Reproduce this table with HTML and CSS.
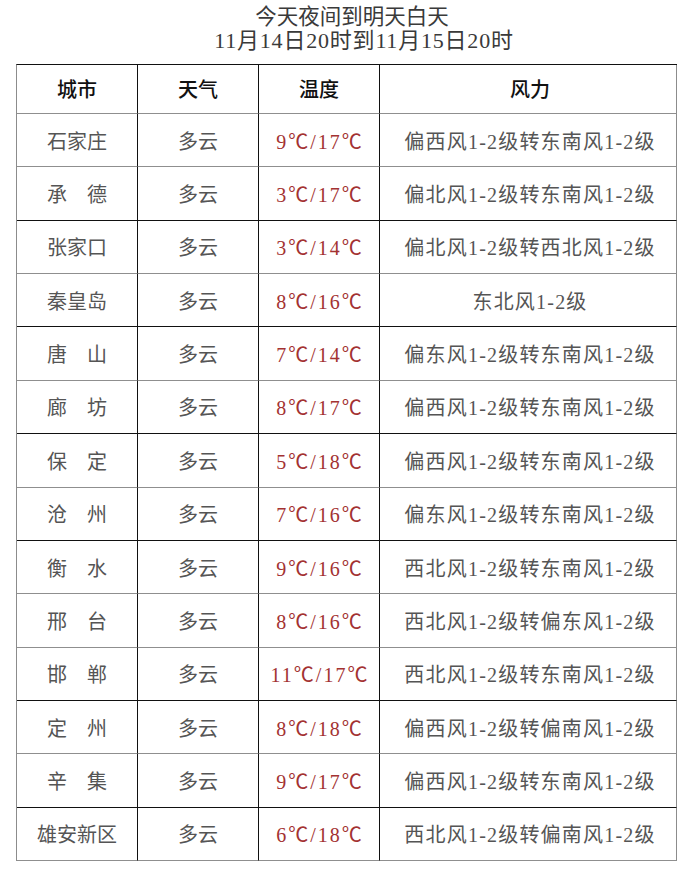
FILE: index.html
```html
<!DOCTYPE html>
<html lang="zh-CN">
<head>
<meta charset="utf-8">
<title>今天夜间到明天白天</title>
<link rel="stylesheet" href="styles.css">
</head>
<body>
<div class="title">
  <div class="title-line first">今天夜间到明天白天</div>
  <div class="title-line second">11月14日20时到11月15日20时</div>
</div>
<div class="grid">
  <div class="row head">
    <div class="cell">城市</div><div class="cell">天气</div><div class="cell">温度</div><div class="cell">风力</div>
  </div>
  <div class="row">
    <div class="cell">石家庄</div><div class="cell">多云</div><div class="cell temp">9℃/17℃</div><div class="cell wind">偏西风1-2级转东南风1-2级</div>
  </div>
  <div class="row dark">
    <div class="cell">承　德</div><div class="cell">多云</div><div class="cell temp">3℃/17℃</div><div class="cell wind">偏北风1-2级转东南风1-2级</div>
  </div>
  <div class="row">
    <div class="cell">张家口</div><div class="cell">多云</div><div class="cell temp">3℃/14℃</div><div class="cell wind">偏北风1-2级转西北风1-2级</div>
  </div>
  <div class="row dark">
    <div class="cell">秦皇岛</div><div class="cell">多云</div><div class="cell temp">8℃/16℃</div><div class="cell wind">东北风1-2级</div>
  </div>
  <div class="row">
    <div class="cell">唐　山</div><div class="cell">多云</div><div class="cell temp">7℃/14℃</div><div class="cell wind">偏东风1-2级转东南风1-2级</div>
  </div>
  <div class="row dark">
    <div class="cell">廊　坊</div><div class="cell">多云</div><div class="cell temp">8℃/17℃</div><div class="cell wind">偏西风1-2级转东南风1-2级</div>
  </div>
  <div class="row">
    <div class="cell">保　定</div><div class="cell">多云</div><div class="cell temp">5℃/18℃</div><div class="cell wind">偏西风1-2级转东南风1-2级</div>
  </div>
  <div class="row dark">
    <div class="cell">沧　州</div><div class="cell">多云</div><div class="cell temp">7℃/16℃</div><div class="cell wind">偏东风1-2级转东南风1-2级</div>
  </div>
  <div class="row">
    <div class="cell">衡　水</div><div class="cell">多云</div><div class="cell temp">9℃/16℃</div><div class="cell wind">西北风1-2级转东南风1-2级</div>
  </div>
  <div class="row">
    <div class="cell">邢　台</div><div class="cell">多云</div><div class="cell temp">8℃/16℃</div><div class="cell wind">西北风1-2级转偏东风1-2级</div>
  </div>
  <div class="row dark">
    <div class="cell">邯　郸</div><div class="cell">多云</div><div class="cell temp">11℃/17℃</div><div class="cell wind">西北风1-2级转东南风1-2级</div>
  </div>
  <div class="row">
    <div class="cell">定　州</div><div class="cell">多云</div><div class="cell temp">8℃/18℃</div><div class="cell wind">偏西风1-2级转偏南风1-2级</div>
  </div>
  <div class="row dark">
    <div class="cell">辛　集</div><div class="cell">多云</div><div class="cell temp">9℃/17℃</div><div class="cell wind">偏西风1-2级转东南风1-2级</div>
  </div>
  <div class="row">
    <div class="cell">雄安新区</div><div class="cell">多云</div><div class="cell temp">6℃/18℃</div><div class="cell wind">西北风1-2级转偏南风1-2级</div>
  </div>
</div>
</body>
</html>
```
FILE: styles.css
```css
html, body {
  margin: 0;
  padding: 0;
  background: #ffffff;
}

body {
  font-family: "Liberation Serif", "Noto Sans CJK SC", serif;
  color: #555555;
}

.title {
  padding-top: 5px;
  color: #3a3a3a;
  text-align: center;
}

.title-line {
  font-size: 21.5px;
  line-height: 24px;
}

.title-line.first {
  padding-left: 14px;
}

.title-line.second {
  padding-left: 38px;
  font-size: 22px;
  letter-spacing: 0.8px;
}

.grid {
  display: grid;
  grid-template-columns: 121px 121px 121px 297px;
  grid-template-rows: 49px;
  grid-auto-rows: 53.36px;
  width: 661px;
  box-sizing: border-box;
  margin: 11px 0 0 16px;
  border-top: 1px solid #111111;
  border-left: 1px solid #8c8c8c;
}

.row {
  display: contents;
}

.cell {
  box-sizing: border-box;
  display: flex;
  align-items: center;
  justify-content: center;
  border-right: 1px solid #111111;
  border-bottom: 1px solid #8f8f8f;
  font-size: 20px;
  white-space: nowrap;
}

.cell:last-child {
  border-right-color: #8c8c8c;
  padding-left: 4px;
}

.cell.wind {
  letter-spacing: 1.2px;
}

.row.dark .cell {
  border-bottom-color: #111111;
}

.row.head .cell {
  color: #111111;
  font-weight: 500;
  padding-bottom: 2px;
}

.cell.temp {
  color: #a33232;
  letter-spacing: 2px;
  padding-left: 2px;
}
```
